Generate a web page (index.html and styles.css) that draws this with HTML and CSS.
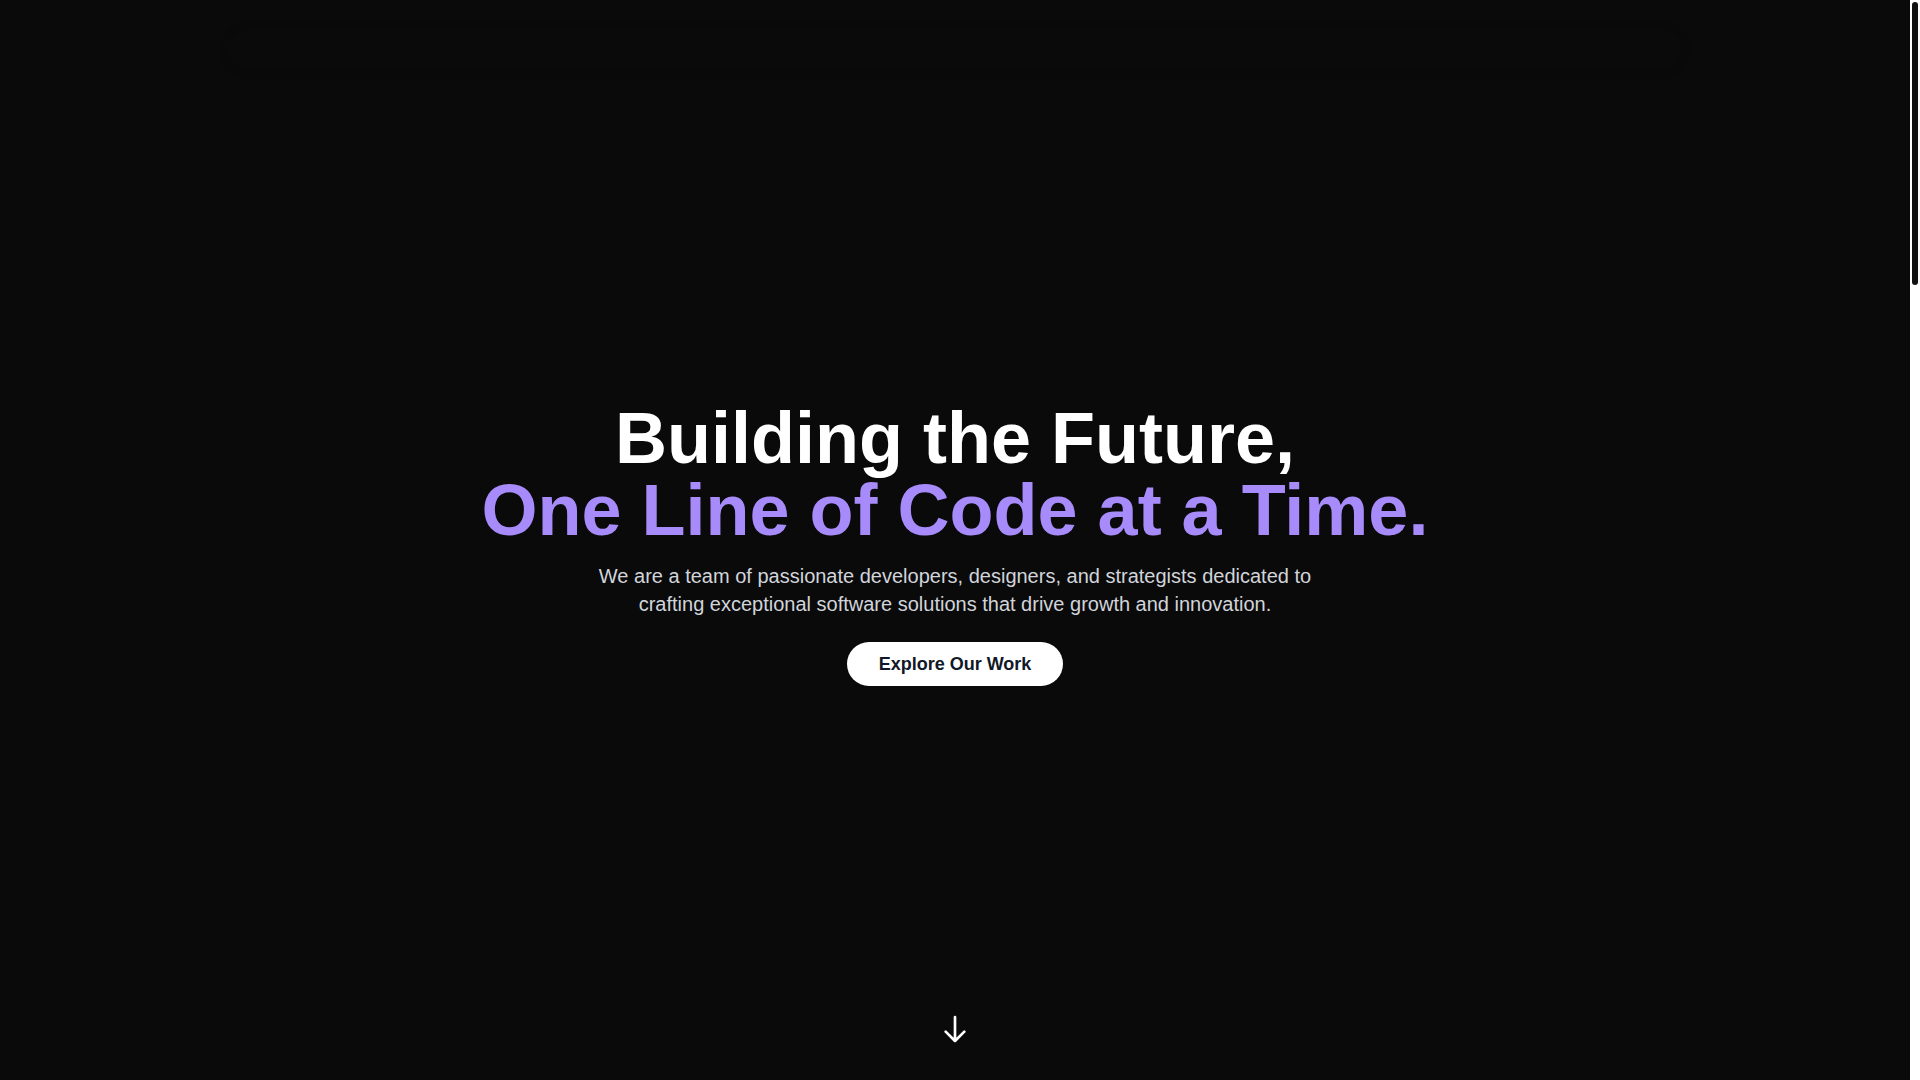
FILE: index.html
```html
<!DOCTYPE html>
<html lang="en">
<head>
    <meta charset="UTF-8">
    <meta name="viewport" content="width=device-width, initial-scale=1.0">
    <title>Building the Future</title>

    <link rel="stylesheet" href="styles.css">
</head>
<body>
    <main class="hero">
        <div class="navbar"></div>

        <section class="hero-content">
            <h1 class="hero-title">
                Building the Future,<br>
                <span class="accent">One Line of Code at a Time.</span>
            </h1>
            <p class="hero-text">We are a team of passionate developers, designers, and strategists dedicated to crafting exceptional software solutions that drive growth and innovation.</p>
            <a class="hero-btn" href="#work">Explore Our Work</a>
        </section>

        <a class="scroll-down" href="#work" aria-label="Scroll down">
            <svg width="32" height="32" viewBox="0 0 24 24" fill="none" stroke="currentColor" stroke-width="2" stroke-linecap="round" stroke-linejoin="round">
                <path d="M19 14l-7 7m0 0l-7-7m7 7V3"/>
            </svg>
        </a>
    </main>

    <!-- scrollbar -->
    <div class="scroll-track" aria-hidden="true">
        <div class="scroll-thumb"></div>
    </div>
</body>
</html>
```

FILE: styles.css
```css
* {
    margin: 0;
    padding: 0;
    box-sizing: border-box;
}

body {
    display: flex;
    min-height: 100vh;
    background-color: #0a0a0a;
    color: #fff;
    font-family: "Liberation Sans", Arial, sans-serif;
}

a {
    color: inherit;
    text-decoration: none;
}

.hero {
    flex: 1;
    display: grid;
    grid-template-rows: 1fr auto 1fr;
    justify-items: center;
    padding: 30px 0 35px;
}

.navbar {
    width: 76%;
    height: 40px;
    border-radius: 20px;
    box-shadow: 0 0 16px rgba(0, 0, 0, 0.05);
}

.hero-content {
    display: flex;
    flex-direction: column;
    align-items: center;
    padding: 13px 16px 0;
    text-align: center;
}

.hero-title {
    margin-bottom: 16px;
    font-size: 72px;
    line-height: 72px;
    font-weight: bold;
}

.accent {
    color: #a78bfa;
}

.hero-text {
    max-width: 768px;
    margin-bottom: 24px;
    color: #d1d5db;
    font-size: 20px;
    line-height: 28px;
}

.hero-btn {
    padding: 8px 32px;
    border-radius: 22px;
    background-color: #fff;
    color: #111827;
    font-size: 18px;
    line-height: 28px;
    font-weight: bold;
}

.scroll-down {
    align-self: end;
}

.scroll-down svg {
    display: block;
}

/* Scrollbar */
.scroll-track {
    width: 10px;
    padding: 2px;
    background-color: #fff;
}

.scroll-thumb {
    height: 26.3%;
    border-radius: 3px;
    background-color: #111;
}
```
